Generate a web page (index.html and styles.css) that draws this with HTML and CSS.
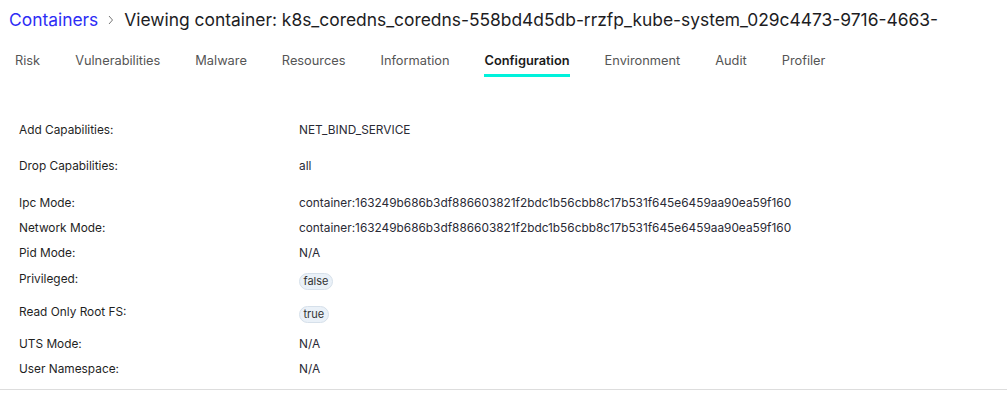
FILE: index.html
```html
<!DOCTYPE html>
<html>
<head>
<meta charset="utf-8">
<link rel="stylesheet" href="styles.css">
</head>
<body>
<header class="crumbs">
  <a class="crumb-link">Containers</a>
  <svg class="chev" width="8" height="10" viewBox="0 0 8 10"><path d="M2 1 L5.5 5 L2 9" fill="none" stroke="#777" stroke-width="1"/></svg>
  <span class="crumb-title">Viewing container: k8s_coredns_coredns-558bd4d5db-rrzfp_kube-system_029c4473-9716-4663-</span>
</header>
<nav class="tabs">
  <span class="tab">Risk</span>
  <span class="tab">Vulnerabilities</span>
  <span class="tab">Malware</span>
  <span class="tab">Resources</span>
  <span class="tab">Information</span>
  <span class="tab active">Configuration</span>
  <span class="tab">Environment</span>
  <span class="tab">Audit</span>
  <span class="tab">Profiler</span>
</nav>
<section class="details">
  <div class="row spaced"><div class="label">Add Capabilities:</div><div class="value">NET_BIND_SERVICE</div></div>
  <div class="row spaced wide"><div class="label">Drop Capabilities:</div><div class="value">all</div></div>
  <div class="row"><div class="label">Ipc Mode:</div><div class="value">container:163249b686b3df886603821f2bdc1b56cbb8c17b531f645e6459aa90ea59f160</div></div>
  <div class="row"><div class="label">Network Mode:</div><div class="value">container:163249b686b3df886603821f2bdc1b56cbb8c17b531f645e6459aa90ea59f160</div></div>
  <div class="row"><div class="label">Pid Mode:</div><div class="value">N/A</div></div>
  <div class="row pillrow"><div class="label">Privileged:</div><div class="value"><span class="pill">false</span></div></div>
  <div class="row pillrow"><div class="label">Read Only Root FS:</div><div class="value"><span class="pill">true</span></div></div>
  <div class="row"><div class="label">UTS Mode:</div><div class="value">N/A</div></div>
  <div class="row"><div class="label">User Namespace:</div><div class="value">N/A</div></div>
</section>
</body>
</html>
```
FILE: styles.css
```css
html, body {
  margin: 0;
  padding: 0;
  background: #fff;
  font-family: Inter, "Noto Sans", sans-serif;
}
.crumbs {
  display: flex;
  align-items: center;
  padding: 7px 0 0 9px;
  height: 25px;
  font-size: 17.4px;
  white-space: nowrap;
}
.crumb-link {
  color: #2d2df5;
}
.chev {
  flex: none;
  margin: 0 9px 0 9px;
}
.crumb-title {
  color: #1d1d1f;
}
.tabs {
  display: flex;
  gap: 35px;
  padding: 21px 0 0 15px;
  font-size: 12.8px;
  color: #555;
}
.tab {
  padding-bottom: 5px;
  border-bottom: 3px solid transparent;
  line-height: 16px;
}
.tab.active {
  font-weight: 600;
  color: #1a1a1a;
  border-bottom-color: #00f2dc;
}
.details {
  margin-top: 40.5px;
  border-bottom: 1px solid #ddd;
  padding: 0 0 7px 19px;
  font-size: 11.85px;
  color: #1f1f1f;
}
.row {
  display: flex;
  align-items: flex-start;
  height: 25px;
  line-height: 25px;
}
.row.spaced {
  margin-bottom: 11px;
}
.row.spaced.wide {
  margin-bottom: 12px;
}
.row.pillrow {
  height: 33px;
}
.row.pillrow .label {
  padding-top: 1px;
}
.label {
  width: 280px;
  flex: none;
}
.value {
  color: #2a2a35;
}
.pill {
  display: inline-block;
  vertical-align: top;
  margin-top: 7.5px;
  padding: 1px 3.5px;
  border: 1px solid #d6e0ea;
  background: #eaf1f8;
  border-radius: 9px;
  font-size: 11px;
  line-height: 13px;
  color: #333;
}
```
